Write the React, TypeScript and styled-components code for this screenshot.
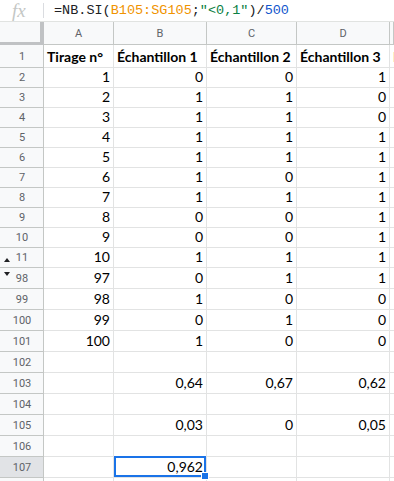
import React from "react";
import styled, { createGlobalStyle } from "styled-components";

const Global = createGlobalStyle`
  html, body { margin: 0; padding: 0; background: #ffffff; overflow: hidden; }
  body { width: 394px; height: 481px; }
`;

const COLS = "44px 70px 93px 90px 93px 1fr";

const Page = styled.div`
  width: 394px;
  height: 481px;
  overflow: hidden;
  background: #fff;
  display: flex;
  flex-direction: column;
`;

const FormulaBar = styled.div`
  height: 22px;
  box-sizing: border-box;
  border-bottom: 1px solid #e1e3e1;
  display: flex;
  align-items: center;
  flex-shrink: 0;
`;

const Fx = styled.div`
  width: 43px;
  box-sizing: border-box;
  padding-left: 12px;
  font-family: "Liberation Serif", serif;
  font-style: italic;
  font-size: 19px;
  color: #c4c7c5;
  line-height: 20px;
`;

const Sep = styled.div`
  width: 1px;
  height: 15px;
  background: #dadce0;
`;

const Formula = styled.div`
  padding-left: 10px;
  font-family: "Liberation Mono", monospace;
  font-size: 13.5px;
  color: #202124;
  white-space: nowrap;
  line-height: 20px;
`;

const Tok = styled.span<{ $c: string }>`
  color: ${(p) => p.$c};
`;

const Row = styled.div<{ $h: number }>`
  display: grid;
  grid-template-columns: ${COLS};
  height: ${(p) => p.$h}px;
  flex-shrink: 0;
`;

const Corner = styled.div`
  background: #f8f9fa;
  border-right: 4px solid #c0c2c4;
  border-bottom: 3px solid #c0c2c4;
  box-sizing: border-box;
`;

const ColHead = styled.div`
  background: #f8f9fa;
  border-right: 1px solid #c4c7c5;
  border-bottom: 1px solid #c4c7c5;
  box-sizing: border-box;
  display: flex;
  align-items: center;
  justify-content: center;
  font-family: "Roboto", "Liberation Sans", sans-serif;
  font-size: 11px;
  color: #5f6368;
  padding-top: 1px;
`;

const RowHead = styled.div<{ $active?: boolean }>`
  position: relative;
  background: ${(p) => (p.$active ? "#e1e3e6" : "#f8f9fa")};
  border-right: 1px solid #c4c7c5;
  border-bottom: 1px solid #c4c7c5;
  box-sizing: border-box;
  display: flex;
  align-items: center;
  justify-content: center;
  font-family: "Roboto", "Liberation Sans", sans-serif;
  font-size: 11px;
  color: #5f6368;
  padding-left: 1px;
`;

const Arrow = styled.span<{ $dir: "up" | "down" }>`
  position: absolute;
  left: 4px;
  ${(p) => (p.$dir === "up" ? "bottom: 5px;" : "top: 4px;")}
  width: 0;
  height: 0;
  border-left: 3px solid transparent;
  border-right: 3px solid transparent;
  ${(p) =>
    p.$dir === "up"
      ? "border-bottom: 4px solid #202124;"
      : "border-top: 4px solid #202124;"}
`;

const Cell = styled.div<{ $bold?: boolean; $left?: boolean }>`
  position: relative;
  border-right: 1px solid #e2e3e3;
  border-bottom: 1px solid #e2e3e3;
  box-sizing: border-box;
  display: flex;
  align-items: flex-end;
  justify-content: ${(p) => (p.$left ? "flex-start" : "flex-end")};
  padding: 0 3px 1px 3px;
  overflow: hidden;
  white-space: nowrap;
  font-family: "Lato", "Liberation Sans", sans-serif;
  font-size: 14px;
  font-weight: ${(p) => (p.$bold ? 700 : 400)};
  color: #000;
  line-height: 18px;
`;

const Selection = styled.div`
  position: absolute;
  inset: -1px 0 0 0;
  border: 2px solid #1a73e8;
  pointer-events: none;
`;

const Handle = styled.div`
  position: absolute;
  right: -3px;
  bottom: -3px;
  width: 6px;
  height: 6px;
  background: #1a73e8;
  border: 1px solid #fff;
  box-sizing: content-box;
  z-index: 2;
`;

const SelWrap = styled(Cell)`
  overflow: visible;
  z-index: 1;
`;

type RowData = {
  n: number;
  h: number;
  cells: string[];
  arrow?: "up" | "down";
  active?: boolean;
  selected?: number;
};

const rows: RowData[] = [
  { n: 2, h: 20, cells: ["1", "0", "0", "1"] },
  { n: 3, h: 20, cells: ["2", "1", "1", "0"] },
  { n: 4, h: 20, cells: ["3", "1", "1", "0"] },
  { n: 5, h: 20, cells: ["4", "1", "1", "1"] },
  { n: 6, h: 20, cells: ["5", "1", "1", "1"] },
  { n: 7, h: 20, cells: ["6", "1", "0", "1"] },
  { n: 8, h: 20, cells: ["7", "1", "1", "1"] },
  { n: 9, h: 20, cells: ["8", "0", "0", "1"] },
  { n: 10, h: 20, cells: ["9", "0", "0", "1"] },
  { n: 11, h: 20, cells: ["10", "1", "1", "1"], arrow: "up" },
  { n: 98, h: 21, cells: ["97", "0", "1", "1"], arrow: "down" },
  { n: 99, h: 21, cells: ["98", "1", "0", "0"] },
  { n: 100, h: 21, cells: ["99", "0", "1", "0"] },
  { n: 101, h: 21, cells: ["100", "1", "0", "0"] },
  { n: 102, h: 21, cells: ["", "", "", ""] },
  { n: 103, h: 21, cells: ["", "0,64", "0,67", "0,62"] },
  { n: 104, h: 21, cells: ["", "", "", ""] },
  { n: 105, h: 21, cells: ["", "0,03", "0", "0,05"] },
  { n: 106, h: 21, cells: ["", "", "", ""] },
  { n: 107, h: 21, cells: ["", "0,962", "", ""], active: true, selected: 1 },
];

export default function App() {
  return (
    <Page>
      <Global />
      <FormulaBar>
        <Fx>fx</Fx>
        <Sep />
        <Formula>
          =NB.SI(<Tok $c="#f09300">B105:SG105</Tok>;
          <Tok $c="#0b8043">"&lt;0,1"</Tok>)/<Tok $c="#1155cc">500</Tok>
        </Formula>
      </FormulaBar>
      <Row $h={23}>
        <Corner />
        <ColHead>A</ColHead>
        <ColHead>B</ColHead>
        <ColHead>C</ColHead>
        <ColHead>D</ColHead>
        <ColHead />
      </Row>
      <Row $h={23}>
        <RowHead>1</RowHead>
        <Cell $bold $left>Tirage n°</Cell>
        <Cell $bold $left>Échantillon 1</Cell>
        <Cell $bold $left>Échantillon 2</Cell>
        <Cell $bold $left>Échantillon 3</Cell>
        <Cell $bold $left>Échantillon 4</Cell>
      </Row>
      {rows.map((r) => (
        <Row key={r.n} $h={r.h}>
          <RowHead $active={r.active}>
            {r.arrow && <Arrow $dir={r.arrow} />}
            {r.n}
          </RowHead>
          {r.cells.map((c, i) =>
            r.selected === i ? (
              <SelWrap key={i}>
                {c}
                <Selection />
                <Handle />
              </SelWrap>
            ) : (
              <Cell key={i}>{c}</Cell>
            )
          )}
          <Cell />
        </Row>
      ))}
      <Row $h={21}>
        <RowHead />
        <Cell />
        <Cell />
        <Cell />
        <Cell />
        <Cell />
      </Row>
    </Page>
  );
}
